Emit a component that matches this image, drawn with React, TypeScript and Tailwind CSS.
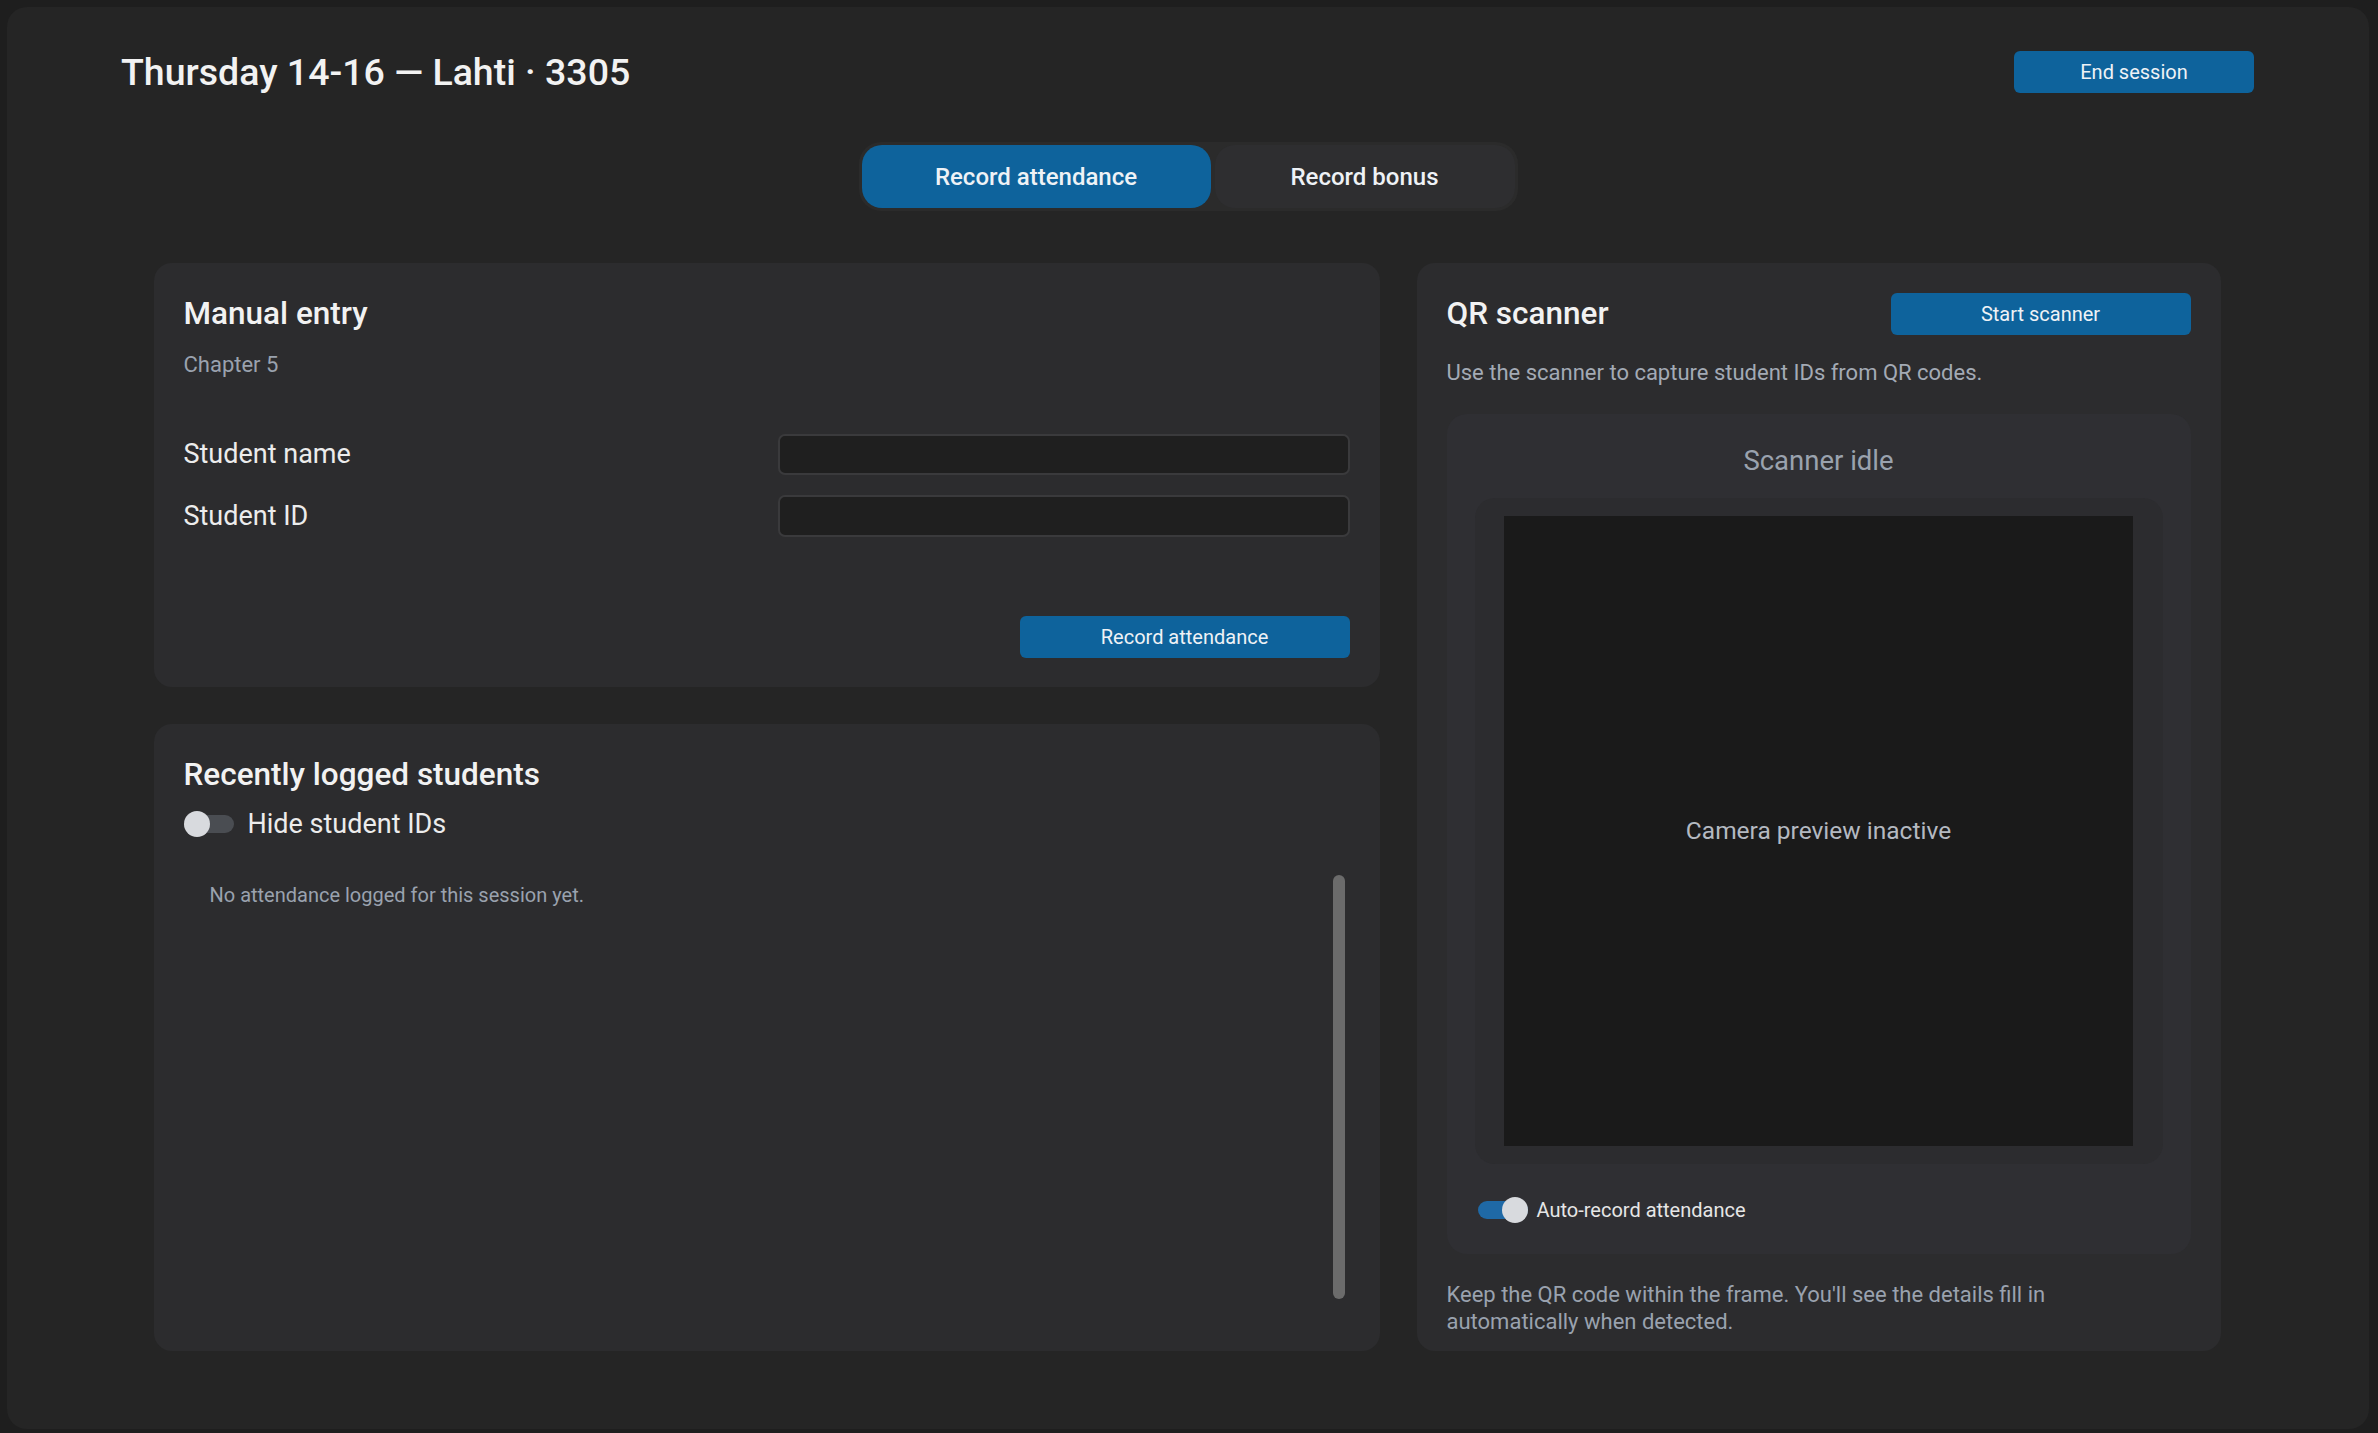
import { useState } from "react";

function Toggle({ on, onChange }: { on: boolean; onChange: () => void }) {
  return (
    <button
      type="button"
      onClick={onChange}
      className="relative h-[26px] w-[50px] shrink-0"
    >
      <span
        className={`absolute left-0 top-[4px] h-[18px] w-[50px] rounded-full ${
          on ? "bg-[#1f69a6]" : "bg-[#4a4d52]"
        }`}
      />
      <span
        className={`absolute top-0 h-[26px] w-[26px] rounded-full bg-[#d8dade] ${
          on ? "left-[24px]" : "left-0"
        }`}
      />
    </button>
  );
}

function Card({ className, children }: { className?: string; children: React.ReactNode }) {
  return (
    <div className={`rounded-[18px] bg-[#2c2c2e] px-[30px] pt-[30px] ${className ?? ""}`}>
      {children}
    </div>
  );
}

export default function App() {
  const [tab, setTab] = useState<"attendance" | "bonus">("attendance");
  const [hideIds, setHideIds] = useState(false);
  const [autoRecord, setAutoRecord] = useState(true);

  return (
    <div
      className="h-[1433px] w-[2378px] bg-[#1e1e1e] pl-[7px] pr-[9px] pt-[7px] pb-[4px] text-[#ececec]"
      style={{ fontFamily: "Roboto, 'Noto Sans', sans-serif" }}
    >
      <div className="flex h-full flex-col rounded-[20px] bg-[#252525]">
        {/* header */}
        <div className="flex h-[86px] items-end justify-between pl-[114px] pr-[115px]">
          <h1 className="mb-[-1px] text-[37.5px] font-medium leading-[44px] text-[#f2f2f2]">
            Thursday 14-16 — Lahti · 3305
          </h1>
          <button className="h-[42px] w-[240px] rounded-[6px] bg-[#0e639c] text-[20px] text-[#eef2f6]">
            End session
          </button>
        </div>

        {/* tabs */}
        <div className="mt-[49px] flex justify-center">
          <div className="flex h-[69px] w-[659px] gap-[4px] rounded-[22px] bg-[#2b2b2b] p-[3px]">
            <button
              onClick={() => setTab("attendance")}
              className={`w-[349px] rounded-[20px] text-[24px] font-medium ${
                tab === "attendance" ? "bg-[#0e639c] text-[#eef2f6]" : "bg-[#2e2e30] text-[#eef2f6]"
              }`}
            >
              Record attendance
            </button>
            <button
              onClick={() => setTab("bonus")}
              className={`flex-1 rounded-[20px] text-[24px] font-medium ${
                tab === "bonus" ? "bg-[#0e639c] text-[#eef2f6]" : "bg-[#2e2e30] text-[#eef2f6]"
              }`}
            >
              Record bonus
            </button>
          </div>
        </div>

        {/* body */}
        <div className="mt-[52px] grid grid-cols-[1226px_804px] justify-center gap-[37px] pr-[2px]">
          <div className="flex flex-col gap-[37px]">
            <Card className="h-[424px] pb-[29px]">
              <div className="flex h-[42px] items-center">
                <h2 className="text-[31.5px] font-medium leading-[42px] text-[#f2f2f2]">Manual entry</h2>
              </div>
              <p className="mt-[16px] text-[22px] leading-[28px] text-[#9aa2ae]">Chapter 5</p>
              <div className="mt-[55px] grid grid-cols-[1fr_572px] items-center gap-y-[20px]">
                <label className="text-[27px] leading-[41px]">Student name</label>
                <input className="h-[41px] rounded-[7px] border-2 border-[#3a3a3c] bg-[#1f1f1f] px-3 text-[20px] text-[#ececec] outline-none" />
                <label className="text-[27px] leading-[42px]">Student ID</label>
                <input className="h-[42px] rounded-[7px] border-2 border-[#3a3a3c] bg-[#1f1f1f] px-3 text-[20px] text-[#ececec] outline-none" />
              </div>
              <div className="mt-[79px] flex justify-end">
                <button className="h-[42px] w-[330px] rounded-[6px] bg-[#0e639c] text-[20px] text-[#eef2f6]">
                  Record attendance
                </button>
              </div>
            </Card>

            <Card className="flex h-[627px] flex-col">
              <div className="flex h-[42px] items-center">
                <h2 className="text-[31.5px] font-medium leading-[42px] text-[#f2f2f2]">
                  Recently logged students
                </h2>
              </div>
              <div className="mt-[12px] flex h-[32px] items-center gap-[14px]">
                <Toggle on={hideIds} onChange={() => setHideIds(!hideIds)} />
                <span className="text-[27px] leading-[32px]">Hide student IDs</span>
              </div>
              <div className="mt-[27px] flex h-[440px] gap-2">
                <div className="flex-1 pl-[26px] pt-[15px]">
                  <p className="text-[20px] leading-[26px] text-[#9aa2ae]">
                    No attendance logged for this session yet.
                  </p>
                </div>
                <div className="mr-[5px] flex w-[12px] flex-col py-[8px]">
                  <div className="flex-1 rounded-full bg-[#6b6b6b]" />
                </div>
              </div>
            </Card>
          </div>

          <Card className="flex flex-col">
            <div className="flex h-[42px] items-center justify-between">
              <h2 className="text-[31.5px] font-medium leading-[42px] text-[#f2f2f2]">QR scanner</h2>
              <button className="h-[42px] w-[300px] rounded-[6px] bg-[#0e639c] text-[20px] text-[#eef2f6]">
                Start scanner
              </button>
            </div>
            <p className="mt-[24px] text-[22px] leading-[28px] text-[#a3aab5]">
              Use the scanner to capture student IDs from QR codes.
            </p>
            <div className="mt-[27px] flex h-[840px] flex-col rounded-[20px] bg-[#2f2f33] px-[28px] pt-[30px]">
              <p className="text-center text-[27.5px] leading-[34px] text-[#9aa2ae]">Scanner idle</p>
              <div className="mt-[20px] flex justify-center rounded-[20px] bg-[#2c2c2f] py-[18px]">
                <div className="flex h-[630px] w-[629px] items-center justify-center bg-[#1a1a1a]">
                  <span className="text-[24.5px] text-[#b4b9c1]">Camera preview inactive</span>
                </div>
              </div>
              <div className="mt-[33px] flex items-center gap-[9px] pl-[3px]">
                <Toggle on={autoRecord} onChange={() => setAutoRecord(!autoRecord)} />
                <span className="text-[20px] leading-[26px] text-[#e6e6e6]">Auto-record attendance</span>
              </div>
            </div>
            <p className="mt-[27px] max-w-[640px] text-[22px] leading-[27px] text-[#9aa2ae]">
              Keep the QR code within the frame. You'll see the details fill in automatically when detected.
            </p>
          </Card>
        </div>
      </div>
    </div>
  );
}
